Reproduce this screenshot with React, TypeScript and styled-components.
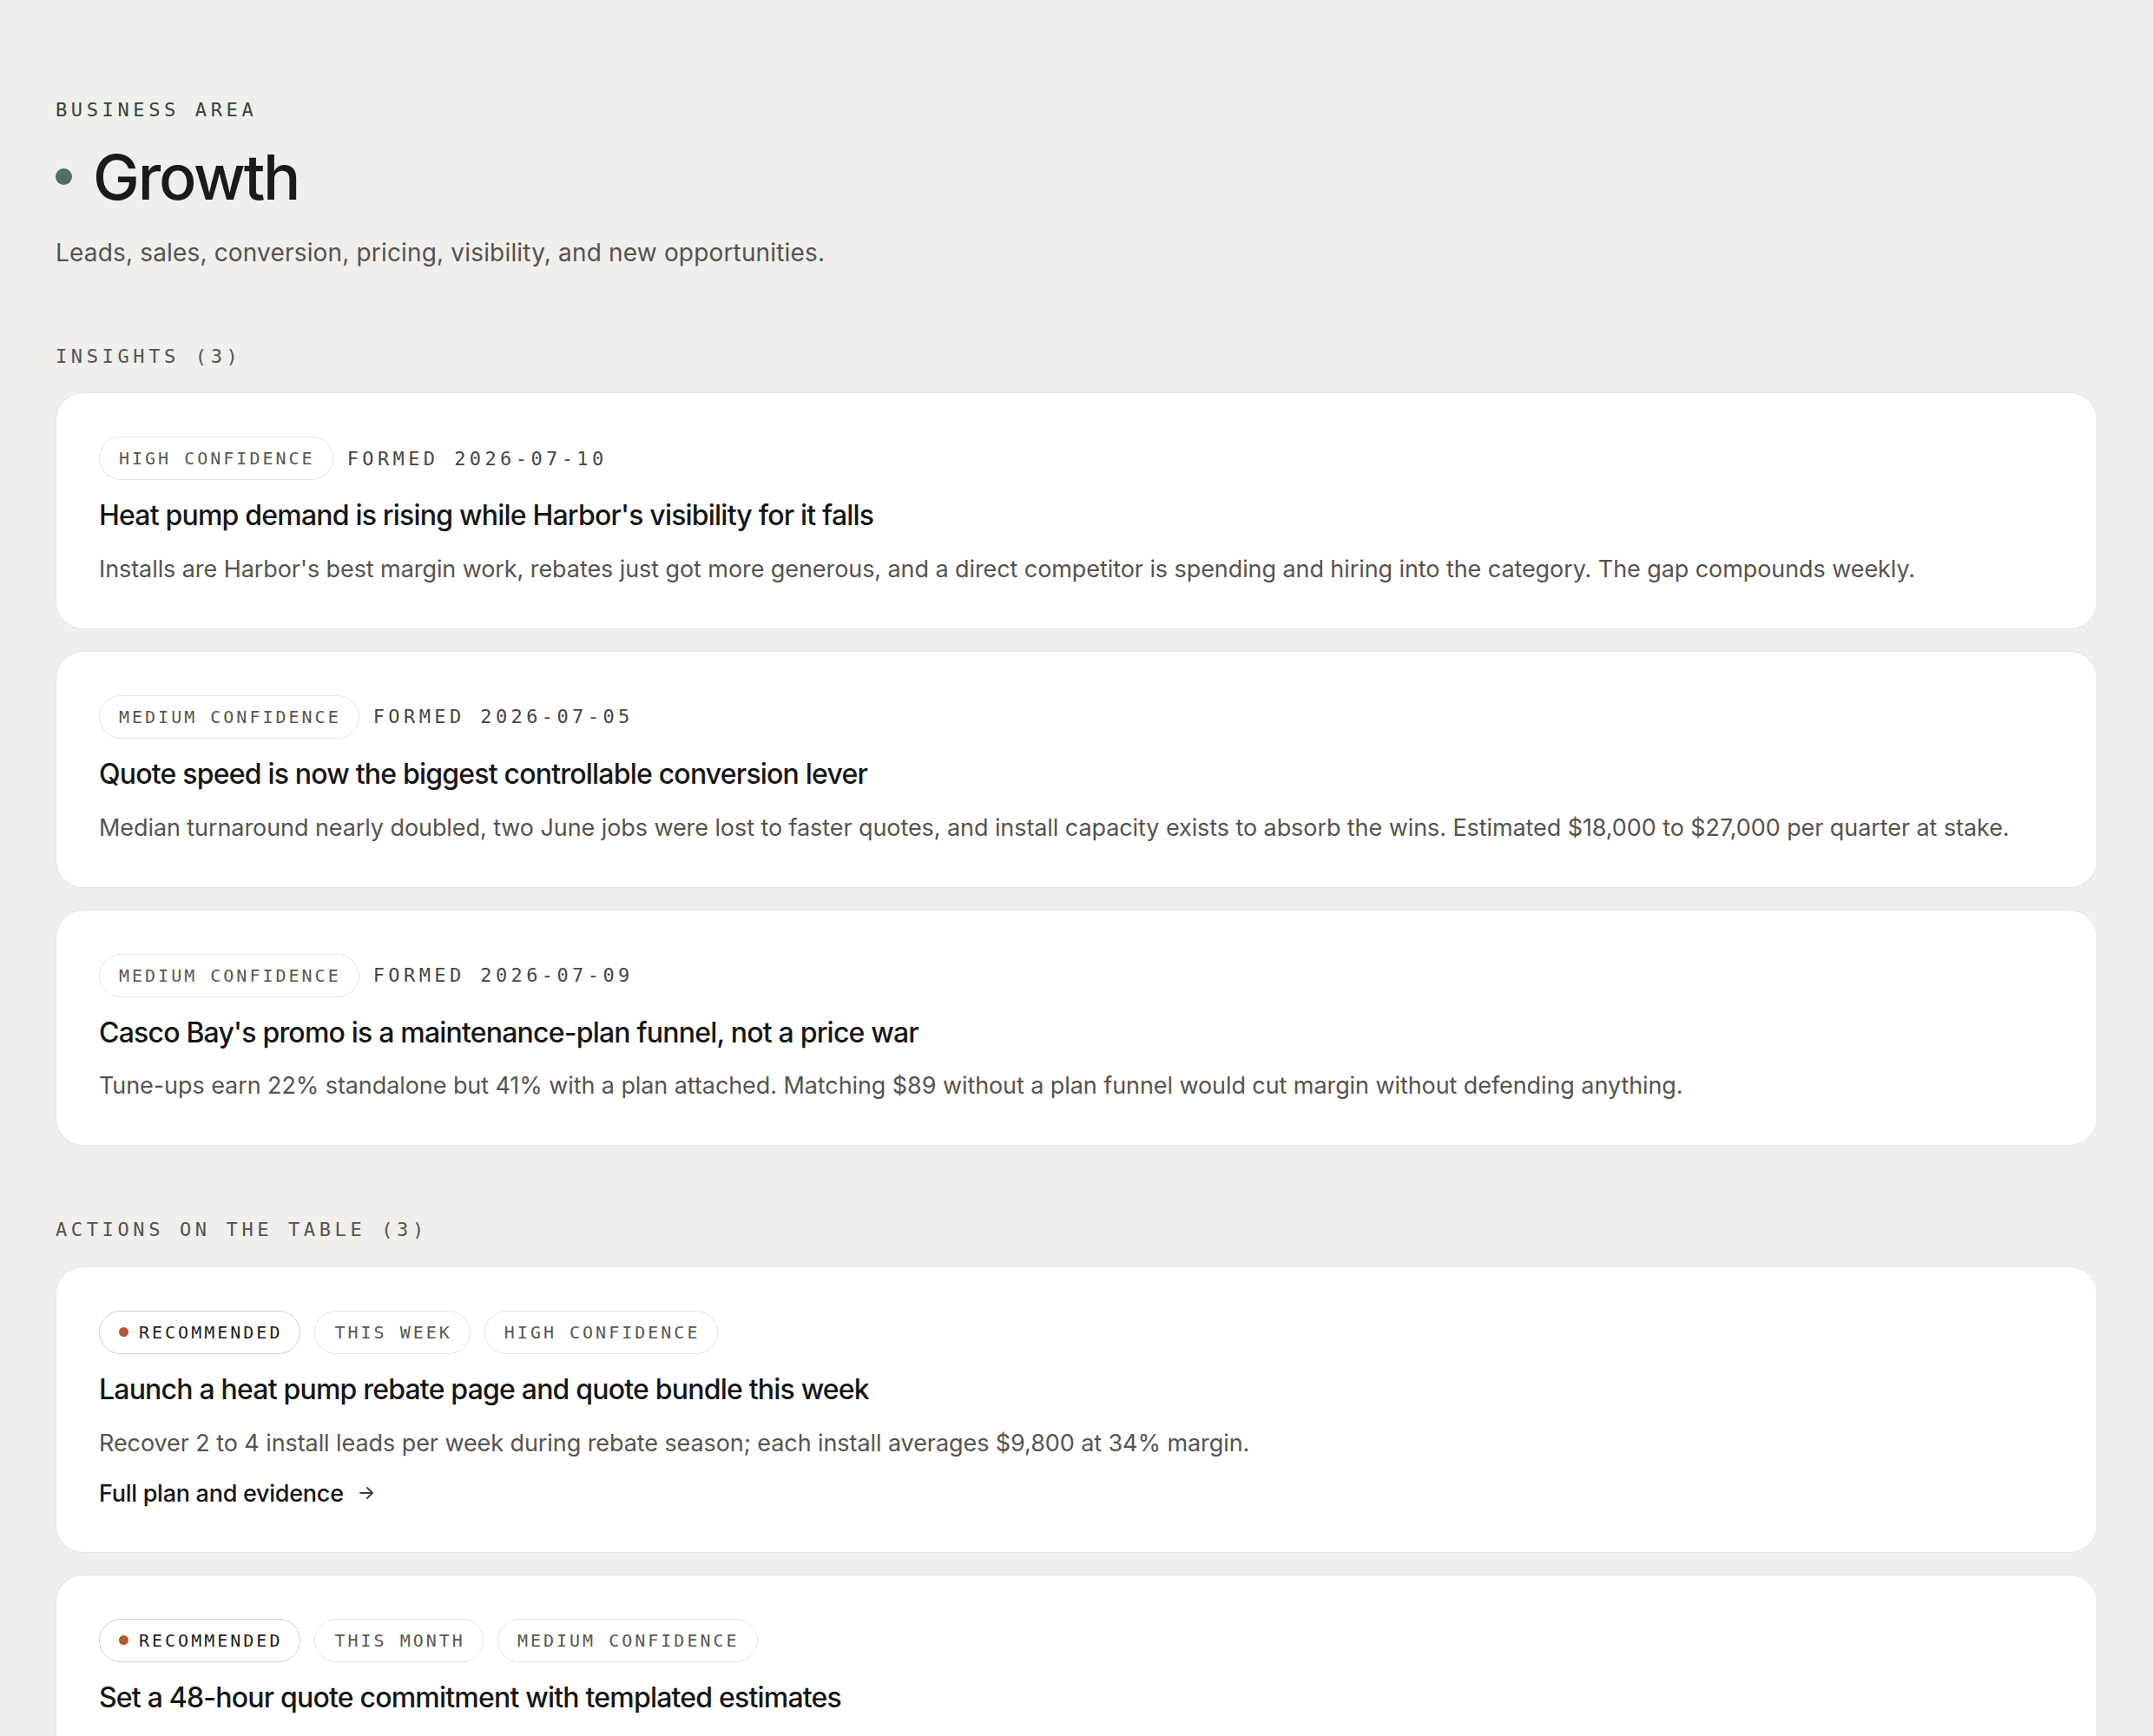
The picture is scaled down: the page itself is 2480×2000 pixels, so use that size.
import React from "react";
import styled, { createGlobalStyle } from "styled-components";

const Global = createGlobalStyle`
  html, body { margin: 0; padding: 0; background: #f0efec; }
  body { font-family: Inter, "Noto Sans", sans-serif; -webkit-font-smoothing: antialiased; }
  * { box-sizing: border-box; }
`;

const Page = styled.main`
  padding: 112px 64px 64px;
  display: flex;
  flex-direction: column;
`;

const Eyebrow = styled.div<{ $tone?: "green" | "gray" }>`
  font-family: "DejaVu Sans Mono", "Liberation Mono", monospace;
  font-size: 22px;
  line-height: 30.8px;
  letter-spacing: 0.21em;
  text-transform: uppercase;
  color: ${(p) => (p.$tone === "green" ? "#34443a" : "#55524d")};
`;

const TitleRow = styled.div`
  display: flex;
  align-items: center;
  gap: 24px;
  margin-top: 21px;
`;

const Dot = styled.span<{ $size: number; $color: string }>`
  width: ${(p) => p.$size}px;
  height: ${(p) => p.$size}px;
  border-radius: 50%;
  background: ${(p) => p.$color};
  flex: none;
`;

const PageTitle = styled.h1`
  margin: 0;
  font-family: Inter, sans-serif;
  font-weight: 500;
  font-size: 72px;
  line-height: 79px;
  letter-spacing: -0.03em;
  color: #1a1a1a;
`;

const Lede = styled.p`
  margin: 26px 0 0;
  font-size: 28px;
  line-height: 44.8px;
  letter-spacing: 0.006em;
  color: #55524d;
`;

const Section = styled.section`
  margin-top: 82px;
  display: flex;
  flex-direction: column;
`;

const CardList = styled.div`
  margin-top: 26px;
  display: flex;
  flex-direction: column;
  gap: 25px;
`;

const Card = styled.article`
  background: #ffffff;
  border: 1px solid #e7e5e0;
  border-radius: 32px;
  padding: 50px 49px 48px;
  display: flex;
  flex-direction: column;
`;

const MetaRow = styled.div`
  display: flex;
  align-items: center;
  gap: 16px;
`;

const Pill = styled.span<{ $strong?: boolean }>`
  display: inline-flex;
  align-items: center;
  gap: 12px;
  height: 50px;
  padding: 0 20px 0 22px;
  border-radius: 999px;
  border: 1.5px solid ${(p) => (p.$strong ? "#d2d0cb" : "#e7e5e0")};
  background: #fff;
  font-family: "DejaVu Sans Mono", "Liberation Mono", monospace;
  font-size: 20px;
  letter-spacing: 0.15em;
  text-transform: uppercase;
  color: ${(p) => (p.$strong ? "#1c1c1c" : "#5a5650")};
`;

const Formed = styled.span`
  font-family: "DejaVu Sans Mono", "Liberation Mono", monospace;
  font-size: 22px;
  letter-spacing: 0.2em;
  color: #47443f;
`;

const CardTitle = styled.h3`
  margin: 20px 0 0;
  font-family: Inter, sans-serif;
  font-weight: 500;
  font-size: 32px;
  line-height: 41.6px;
  letter-spacing: -0.025em;
  color: #161616;
`;

const CardBody = styled.p`
  margin: 21px 0 0;
  font-size: 27px;
  line-height: 40px;
  letter-spacing: -0.003em;
  color: #57534e;
`;

const PlanLink = styled.a`
  margin-top: 18px;
  display: inline-flex;
  align-items: center;
  gap: 16px;
  align-self: flex-start;
  font-size: 27px;
  line-height: 39.2px;
  font-weight: 500;
  letter-spacing: -0.01em;
  color: #161616;
  text-decoration: none;
`;

const Arrow = () => (
  <svg width="20" height="20" viewBox="0 0 20 20" fill="none" stroke="#33443b" strokeWidth="1.8" strokeLinecap="round" strokeLinejoin="round">
    <path d="M3 10h14" />
    <path d="M11 4l6 6-6 6" />
  </svg>
);

type Insight = { confidence: string; formed: string; title: string; body: string };
type Action = { timing: string; confidence: string; title: string; body: string };

const insights: Insight[] = [
  {
    confidence: "High confidence",
    formed: "2026-07-10",
    title: "Heat pump demand is rising while Harbor's visibility for it falls",
    body:
      "Installs are Harbor's best margin work, rebates just got more generous, and a direct competitor is spending and hiring into the category. The gap compounds weekly.",
  },
  {
    confidence: "Medium confidence",
    formed: "2026-07-05",
    title: "Quote speed is now the biggest controllable conversion lever",
    body:
      "Median turnaround nearly doubled, two June jobs were lost to faster quotes, and install capacity exists to absorb the wins. Estimated $18,000 to $27,000 per quarter at stake.",
  },
  {
    confidence: "Medium confidence",
    formed: "2026-07-09",
    title: "Casco Bay's promo is a maintenance-plan funnel, not a price war",
    body:
      "Tune-ups earn 22% standalone but 41% with a plan attached. Matching $89 without a plan funnel would cut margin without defending anything.",
  },
];

const actions: Action[] = [
  {
    timing: "This week",
    confidence: "High confidence",
    title: "Launch a heat pump rebate page and quote bundle this week",
    body: "Recover 2 to 4 install leads per week during rebate season; each install averages $9,800 at 34% margin.",
  },
  {
    timing: "This month",
    confidence: "Medium confidence",
    title: "Set a 48-hour quote commitment with templated estimates",
    body: "Win back jobs lost to faster quotes; worth an estimated $18,000 to $27,000 per quarter.",
  },
  {
    timing: "This quarter",
    confidence: "Medium confidence",
    title: "Build a maintenance plan offer instead of matching the $89 promo",
    body: "Protect tune-up margin and grow recurring plan revenue without entering a price war.",
  },
];

export default function App() {
  return (
    <>
      <Global />
      <Page>
        <Eyebrow $tone="green">Business area</Eyebrow>
        <TitleRow>
          <Dot $size={19} $color="#4e7262" />
          <PageTitle>Growth</PageTitle>
        </TitleRow>
        <Lede>Leads, sales, conversion, pricing, visibility, and new opportunities.</Lede>

        <Section>
          <Eyebrow>Insights (3)</Eyebrow>
          <CardList>
            {insights.map((i) => (
              <Card key={i.title}>
                <MetaRow>
                  <Pill>{i.confidence}</Pill>
                  <Formed>FORMED {i.formed}</Formed>
                </MetaRow>
                <CardTitle>{i.title}</CardTitle>
                <CardBody>{i.body}</CardBody>
              </Card>
            ))}
          </CardList>
        </Section>

        <Section>
          <Eyebrow>Actions on the table (3)</Eyebrow>
          <CardList>
            {actions.map((a) => (
              <Card key={a.title}>
                <MetaRow>
                  <Pill $strong>
                    <Dot $size={11} $color="#b3582f" />
                    Recommended
                  </Pill>
                  <Pill>{a.timing}</Pill>
                  <Pill>{a.confidence}</Pill>
                </MetaRow>
                <CardTitle>{a.title}</CardTitle>
                <CardBody>{a.body}</CardBody>
                <PlanLink href="#">
                  Full plan and evidence
                  <Arrow />
                </PlanLink>
              </Card>
            ))}
          </CardList>
        </Section>
      </Page>
    </>
  );
}
